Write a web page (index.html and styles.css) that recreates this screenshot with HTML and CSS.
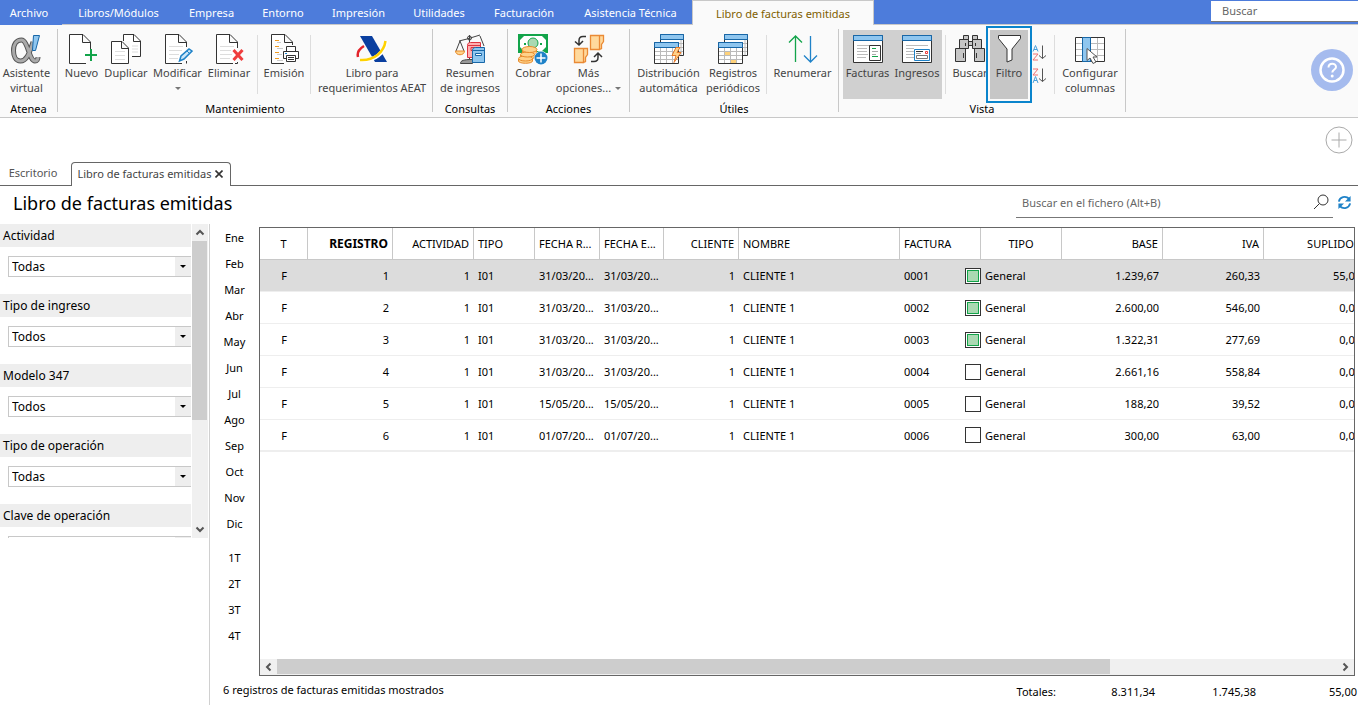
FILE: index.html
```html
<!DOCTYPE html>
<html lang="es">
<head>
<meta charset="utf-8">
<title>Libro de facturas emitidas</title>
<link rel="stylesheet" href="styles.css">
</head>
<body>
<div class="app">
<header class="menubar">
  <nav class="menu" aria-label="Principal">
    <button class="menu-item">Archivo</button>
    <button class="menu-item">Libros/Módulos</button>
    <button class="menu-item">Empresa</button>
    <button class="menu-item">Entorno</button>
    <button class="menu-item">Impresión</button>
    <button class="menu-item">Utilidades</button>
    <button class="menu-item">Facturación</button>
    <button class="menu-item">Asistencia Técnica</button>
    <button class="menu-item active">Libro de facturas emitidas</button>
  </nav>
  <input class="menu-search" type="text" placeholder="Buscar" aria-label="Buscar">
</header>

<section class="ribbon">
  <div class="group g-atenea">
    <div class="tools">
      <button class="tool"><svg viewBox="0 0 32 32" fill="none"><path d="M22 9C18 22 15 28 9.500 28C4.500 28 2.500 23 2.500 17.500C2.500 11 5.500 7 10.500 7C17 7 18 28 24 28C26 28 27 26 27 24" stroke="#555" stroke-width="5"/><path d="M22 9C18 22 15 28 9.500 28C4.500 28 2.500 23 2.500 17.500C2.500 11 5.500 7 10.500 7C17 7 18 28 24 28C26 28 27 26 27 24" stroke="#aaa" stroke-width="3"/><path d="M22.500 2.500h6l-4 15h-3z" fill="#8fc6ef" stroke="#1767a8"/></svg><span>Asistente<br>virtual</span></button>
    </div>
    <h2>Atenea</h2>
  </div>

  <div class="group g-mant">
    <div class="tools">
      <button class="tool w39"><svg viewBox="0 0 32 32" fill="none"><path d="M20 30.500H3.500V1.500H17L24.500 9V18M16.500 1.500V9.500H24.500" fill="#fff" stroke="#333"/><path d="M25 16v12M19 22h12" stroke="#12a44a" stroke-width="2"/></svg>Nuevo</button>
      <button class="tool w50"><svg viewBox="0 0 32 32" fill="none"><path d="M13.500 8V1.500H24L30.500 8V23.500H20V8z" fill="#fff"/><path d="M13.500 8V1.500H24L30.500 8V23.500H22M23.500 1.500V8.500H30.500" stroke="#333"/><path d="M22 13h6M22 16h6M22 19h6" stroke="#ddd"/><path d="M1.500 8.500H12L18.500 15V30.500H1.500zM11.500 8.500V15.500H18.500" fill="#fff" stroke="#333"/><path d="M5 18.500h10M5 22.500h10M5 26.500h10" stroke="#ddd"/></svg>Duplicar</button>
      <button class="tool w53"><svg viewBox="0 0 32 32" fill="none"><path d="M20 30.500H3.500V1.500H17L24.500 9V14M24.500 28v2.500M16.500 1.500V9.500H24.500" fill="#fff" stroke="#333"/><path d="M7 13.500h14M7 17.500h13M7 21.500h10M7 25.500h9" stroke="#ddd"/><path d="M17.500 28l1.500-5 8-7 3 2-8 8z" fill="#cce6f8" stroke="#1f82c8" stroke-width="1.500"/><path d="M25 18l3 3" stroke="#1f82c8"/></svg>Modificar<span class="arrow"></span></button>
      <button class="tool w50"><svg viewBox="0 0 32 32" fill="none"><path d="M20 30.500H3.500V1.500H17L24.500 9V15M24.500 29v1.500H22M16.500 1.500V9.500H24.500" fill="#fff" stroke="#333"/><path d="M7 13.500h14M7 17.500h11M7 21.500h12M7 25.500h10" stroke="#ddd"/><path d="M20.500 17l9 10M29.500 17l-9 10" stroke="#ef3d3d" stroke-width="3"/></svg>Eliminar</button>
      <span class="sep"></span>
      <button class="tool w46"><svg viewBox="0 0 32 32" fill="none"><path d="M16 30.500H3.500V1.500H17L24.500 9V12M16.500 1.500V9.500H24.500" fill="#fff" stroke="#333"/><path d="M7 7.500h4M7 13.500h4M7 19.500h4M7 25.500h4" stroke="#f09a20"/><path d="M9 9.500h4M9 15.500h6M9 21.500h5M9 27.500h6" stroke="#ccc"/><path d="M18.500 18V13.500h9V18M15.500 18.500h15v7h-15z" fill="#fff" stroke="#333"/><path d="M18.500 22.500h9v6h-9zM20 24.500h6M20 26.500h6" fill="#fff" stroke="#333"/><path d="M17 20.500h2" stroke="#1f82c8"/></svg>Emisión</button>
      <span class="sep"></span>
      <button class="tool w116"><svg viewBox="0 0 32 32" fill="none"><path d="M4 3h12l15 26H19z" fill="#0a3fa0"/><path d="M8 13C3 16 1 20 2 24" stroke="#e3242b" stroke-width="2.500"/><path d="M30 8C29 20 18 29 4 27" stroke="#fff" stroke-width="4"/><path d="M29.500 8C28 19 18 28 4 27" stroke="#ffd200" stroke-width="2.500"/></svg><span>Libro para<br>requerimientos AEAT</span></button>
    </div>
    <h2>Mantenimiento</h2>
  </div>

  <div class="group g-cons">
    <div class="tools">
      <button class="tool"><svg viewBox="0 0 32 32" fill="none"><path d="M15.500 2v27M5 8l8-2L26 2M13.500 5a2 2 0 1 0 4 0a2 2 0 1 0-4 0M6 8L2 18M6 8l4 10M26 3l4 10" stroke="#444"/><path d="M1.500 18h9c0 5-9 5-9 0z" fill="#ffd28a" stroke="#e78a2a"/><path d="M6.500 30.500c0-3 3-4 12-4v4z" fill="#999" stroke="#444"/><path d="M13.500 12.500c0-2 1-3 3-3h10v15h-13z" fill="#ffb0b0" stroke="#dd3440"/><path d="M14 12.500h12M17 14.500h6v3h-6z" stroke="#dd3440"/><path d="M18.500 17.500c0-2 1-3 3-3h9v15h-12z" fill="#8fc6ef" stroke="#1767a8"/><path d="M19 17.500h11" stroke="#1767a8"/><path d="M21.500 20.500h6v2h-6z" fill="#fff" stroke="#1767a8"/></svg><span>Resumen<br>de ingresos</span></button>
    </div>
    <h2>Consultas</h2>
  </div>

  <div class="group g-acc">
    <div class="tools">
      <button class="tool w42"><svg viewBox="0 0 32 32" fill="none"><path d="M2 2h28v17H2z" fill="#fff" stroke="#12a44a" stroke-width="2"/><path d="M2 2h6L2 8zM30 2h-6l6 6zM30 19v-6l-6 6zM2 19v-6l6 6z" fill="#12a44a"/><circle cx="16" cy="10" r="5" fill="#aad9b2" stroke="#12a44a"/><path d="M7 11h2M23 11h2" stroke="#12a44a" stroke-width="2"/><g fill="#ffd28a" stroke="#e78a2a"><path d="M1.500 26v2c0 3 14 3 14 0v-2M3.500 22v2c0 3 14 3 14 0v-2M5.500 17v3c0 3 14 3 14 0v-3"/><ellipse cx="8.500" cy="25.500" rx="7" ry="2.500"/><ellipse cx="10.500" cy="21.500" rx="7" ry="2.500"/><ellipse cx="12.500" cy="16.500" rx="7.500" ry="3"/></g><circle cx="24" cy="25" r="7" fill="#fff"/><circle cx="24" cy="25" r="6.500" fill="#1f82c8"/><path d="M24 20.500v9M19.500 25h9" stroke="#fff" stroke-width="1.500"/></svg>Cobrar</button>
      <button class="tool w69"><svg viewBox="0 0 32 32" fill="none"><g fill="#ffd99c" stroke="#ea8a35" stroke-width="1.300"><path d="M26.500 2.500h4v6l-2 3v4l-2 1zM17.500 2.500h9v14h-9zM10.500 15.500h4v6l-2 3v4l-2 1zM1.500 15.500h9v14h-9z"/></g><path d="M13 3.500H10c-3 0-4 1-4 4V12M2 8.500L6 12l4-4M18 28.500h3c3 0 4-1 4-4V20M21 24l4-4 4 4" stroke="#333" stroke-width="1.500"/></svg><span>Más<br>opciones...<i class="arrow inline"></i></span></button>
    </div>
    <h2>Acciones</h2>
  </div>

  <div class="group g-util">
    <div class="tools">
      <button class="tool w69"><svg viewBox="0 0 32 32" fill="none"><path d="M7.500 1.500h23v21h-23z" fill="#fff" stroke="#333"/><path d="M26 10.500h4M26 14.500h4M26 18.500h4M28 7v15" stroke="#bbb"/><path d="M7.500 1.500h23v5h-23z" fill="#8fc6ef" stroke="#1767a8"/><path d="M1.500 9.500h24v21h-24z" fill="#fff" stroke="#333"/><path d="M2 18.500h23M2 22.500h23M2 26.500h23M7.500 15v15M13.500 15v15M19.500 15v15" stroke="#bbb"/><path d="M1.500 9.500h24v5h-24z" fill="#8fc6ef" stroke="#1767a8"/><path d="M23 14.500l-4 8h4l-2 7 7-10h-4l3-5z" fill="#ffd28a" stroke="#e77a2a"/></svg><span>Distribución<br>automática</span></button>
      <button class="tool w60"><svg viewBox="0 0 32 32" fill="none"><path d="M7.500 1.500h23v21h-23z" fill="#fff" stroke="#333"/><path d="M26 10.500h4M26 14.500h4M26 18.500h4M28 7v15" stroke="#bbb"/><path d="M7.500 1.500h23v5h-23z" fill="#8fc6ef" stroke="#1767a8"/><path d="M1.500 9.500h24v21h-24z" fill="#fff" stroke="#333"/><path d="M8 19h5v3H8zM14 27h5v3h-5z" fill="#ffd27a"/><path d="M2 18.500h23M2 22.500h23M2 26.500h23M7.500 15v15M13.500 15v15M19.500 15v15" stroke="#bbb"/><path d="M1.500 9.500h24v5h-24z" fill="#8fc6ef" stroke="#1767a8"/></svg><span>Registros<br>periódicos</span></button>
      <span class="sep"></span>
      <button class="tool w65"><svg viewBox="0 0 32 32" fill="none" stroke-width="1.300"><path d="M8.500 29V3M2 9.500L8.500 3L15 9.500" stroke="#12a44a"/><path d="M23.500 3v26M17 22.500l6.500 6.500 6.500-6.500" stroke="#1f82c8"/></svg>Renumerar</button>
    </div>
    <h2>Útiles</h2>
  </div>

  <div class="group g-vista">
    <div class="tools">
      <div class="pressed">
        <button class="tool w49"><svg viewBox="0 0 32 32" fill="none"><path d="M1.500 2.500h29v27h-29z" fill="#fff" stroke="#333"/><path d="M5 12.500h20M5 15.500h10M5 18.500h10M5 21.500h11M5 24.500h9" stroke="#bbb"/><path d="M1.500 2.500h29v5h-29z" fill="#8fc6ef" stroke="#1767a8"/><path d="M17.500 12.500h11v15h-11z" fill="#fff" stroke="#333"/><path d="M20 15.500h4M20 23.500h6" stroke="#12a44a"/><path d="M20 18.500h6M20 21.500h4" stroke="#aaa"/></svg>Facturas</button>
        <button class="tool w50"><svg viewBox="0 0 32 32" fill="none"><path d="M1.500 2.500h29v27h-29z" fill="#fff" stroke="#333"/><path d="M5 12.500h22M5 15.500h8M5 18.500h8M5 21.500h8M5 24.500h8" stroke="#bbb"/><path d="M1.500 2.500h29v5h-29z" fill="#8fc6ef" stroke="#1767a8"/><path d="M13.500 16.500h15v11h-15z" fill="#fff" stroke="#1f82c8"/><path d="M15 18.500h7" stroke="#333"/><path d="M15 20.500h5" stroke="#999"/><path d="M24.500 18.500h2v2h-2z" stroke="#ef3d3d"/><path d="M15.500 22.500h11v3h-11z" stroke="#777"/></svg>Ingresos</button>
      </div>
      <span class="sep"></span>
      <button class="tool w42"><svg viewBox="0 0 32 32" fill="none"><path d="M9.500 2.500h5v4h-5zM18.500 2.500h5v4h-5zM5.500 6.500h9v9h-9zM18.500 6.500h9v9h-9zM14.500 8.500h4v4h-4zM1.500 15.500h10v13h-10zM20.500 15.500h10v13h-10z" fill="#c6c6c6" stroke="#333"/><path d="M11.500 10v3M21.500 10v3M9.500 20v5M22.500 20v5" stroke="#333"/></svg>Buscar</button>
      <button class="tool filter"><svg viewBox="0 0 32 32" fill="none"><path d="M5.500 2.500h22v3L19 16v11l-5 2V16L5.500 5.500z" fill="#fff" stroke="#333"/></svg>Filtro</button>
      <div class="sorts">
        <button class="sort" aria-label="Orden ascendente"><svg viewBox="0 0 16 16" fill="none"><path d="M2 7L4.500 1L7 7M3 5h3" stroke="#4aa0dc"/><path d="M2 9.500h5L2 15.500h5" stroke="#f07070"/><path d="M11.500 1v13M8 11l3.500 3 3.500-3" stroke="#555"/></svg></button>
        <button class="sort" aria-label="Orden descendente"><svg viewBox="0 0 16 16" fill="none"><path d="M2 1.500h5L2 7.500h5" stroke="#f07070"/><path d="M2 15.500L4.500 9L7 15.500M3 13h3" stroke="#4aa0dc"/><path d="M11.500 1v13M8 11l3.500 3 3.500-3" stroke="#555"/></svg></button>
      </div>
      <span class="sep"></span>
      <button class="tool w64"><svg viewBox="0 0 32 32" fill="none"><path d="M1.500 4.500h29v24h-29z" fill="#fff" stroke="#333"/><path d="M2 10.500h28M2 16.500h28M2 22.500h28M23.500 5v23" stroke="#bbb"/><path d="M8.500 4.500h8v24h-8z" fill="#8fc6ef" stroke="#1767a8"/><path d="M13 15.500v12l3-2.500 3 5.500 3-1.500-3-5h4z" fill="#fff" stroke="#555"/></svg><span>Configurar<br>columnas</span></button>
    </div>
    <h2>Vista</h2>
  </div>
  <button class="help" aria-label="Ayuda"><svg viewBox="0 0 42 42" fill="none"><circle cx="21" cy="21" r="21" fill="#a5bbee"/><circle cx="21" cy="21" r="11.500" stroke="#fff" stroke-width="2.500"/><path d="M17.500 18.500c0-5 7.500-5 7.500-.5 0 2.500-3.700 2.500-3.700 5.500" stroke="#fff" stroke-width="2"/><circle cx="21.200" cy="27" r="1.500" fill="#fff"/></svg></button>
</section>

<div class="spare"><button class="add" aria-label="Añadir"><svg viewBox="0 0 28 28" fill="none"><circle cx="14" cy="14" r="13" stroke="#aaa"/><path d="M14 6.500v15M6.500 14h15" stroke="#aaa"/></svg></button></div>

<nav class="tabs" aria-label="Pestañas">
  <button class="tab">Escritorio</button>
  <button class="tab current">Libro de facturas emitidas <svg viewBox="0 0 8 8"><path d="M.5.5l7 7M7.500.5l-7 7" stroke="#333" stroke-width="1.600"/></svg></button>
</nav>

<div class="titlebar">
  <h1>Libro de facturas emitidas</h1>
  <div class="find">
    <input type="text" placeholder="Buscar en el fichero (Alt+B)" aria-label="Buscar en el fichero">
    <svg viewBox="0 0 16 16" fill="none"><circle cx="10" cy="6" r="5" stroke="#333"/><path d="M6.500 9.500L1 15" stroke="#333"/></svg>
  </div>
  <button class="refresh" aria-label="Actualizar"><svg viewBox="0 0 16 16" fill="none"><path d="M2 7C3 2 9 .5 13 4M14 9c-1 5-7 6.500-11 3" stroke="#1f82c8" stroke-width="2"/><path d="M14.500 1v6h-6zM1.500 15V9h6z" fill="#1f82c8"/></svg></button>
</div>

<main class="body">
  <aside class="side">
    <div class="filters">
      <div class="fields">
        <div class="field"><label for="f1">Actividad</label><select id="f1"><option>Todas</option></select></div>
        <div class="field"><label for="f2">Tipo de ingreso</label><select id="f2"><option>Todos</option></select></div>
        <div class="field"><label for="f3">Modelo 347</label><select id="f3"><option>Todos</option></select></div>
        <div class="field"><label for="f4">Tipo de operación</label><select id="f4"><option>Todas</option></select></div>
        <div class="field"><label for="f5">Clave de operación</label><select id="f5"><option>Todas</option></select></div>
      </div>
      <div class="vbar"><svg viewBox="0 0 16 16" fill="none"><path d="M4.500 10L8 6.500l3.500 3.500" stroke="#555" stroke-width="2"/></svg><span class="vthumb"></span><svg viewBox="0 0 16 16" fill="none"><path d="M4.500 6L8 9.500L11.500 6" stroke="#555" stroke-width="2"/></svg></div>
    </div>
  </aside>
  <nav class="months" aria-label="Periodo">
    <button>Ene</button><button>Feb</button><button>Mar</button><button>Abr</button><button>May</button><button>Jun</button><button>Jul</button><button>Ago</button><button>Sep</button><button>Oct</button><button>Nov</button><button>Dic</button>
    <button class="quarter">1T</button><button>2T</button><button>3T</button><button>4T</button>
  </nav>
  <section class="content">
    <div class="grid">
      <div class="scroll">
      <table>
        <colgroup><col class="c48"><col class="c85"><col class="c81"><col class="c61"><col class="c65"><col class="c64"><col class="c75"><col class="c161"><col class="c81"><col class="c81"><col class="c101"><col class="c101"><col class="c101"></colgroup>
        <thead><tr><th class="mid">T</th><th class="num sorted">REGISTRO</th><th class="num">ACTIVIDAD</th><th>TIPO</th><th>FECHA R...</th><th>FECHA E...</th><th class="num">CLIENTE</th><th>NOMBRE</th><th>FACTURA</th><th class="mid">TIPO</th><th class="num">BASE</th><th class="num">IVA</th><th class="num">SUPLIDOS</th></tr></thead>
        <tbody>
        <tr class="selected"><td class="mid">F</td><td class="num">1</td><td class="num">1</td><td>I01</td><td>31/03/20...</td><td>31/03/20...</td><td class="num">1</td><td>CLIENTE 1</td><td class="inv"><div>0001<input type="checkbox" aria-label="Factura 0001" checked></div></td><td>General</td><td class="num">1.239,67</td><td class="num">260,33</td><td class="num">55,00</td></tr>
        <tr><td class="mid">F</td><td class="num">2</td><td class="num">1</td><td>I01</td><td>31/03/20...</td><td>31/03/20...</td><td class="num">1</td><td>CLIENTE 1</td><td class="inv"><div>0002<input type="checkbox" aria-label="Factura 0002" checked></div></td><td>General</td><td class="num">2.600,00</td><td class="num">546,00</td><td class="num">0,00</td></tr>
        <tr><td class="mid">F</td><td class="num">3</td><td class="num">1</td><td>I01</td><td>31/03/20...</td><td>31/03/20...</td><td class="num">1</td><td>CLIENTE 1</td><td class="inv"><div>0003<input type="checkbox" aria-label="Factura 0003" checked></div></td><td>General</td><td class="num">1.322,31</td><td class="num">277,69</td><td class="num">0,00</td></tr>
        <tr><td class="mid">F</td><td class="num">4</td><td class="num">1</td><td>I01</td><td>31/03/20...</td><td>31/03/20...</td><td class="num">1</td><td>CLIENTE 1</td><td class="inv"><div>0004<input type="checkbox" aria-label="Factura 0004"></div></td><td>General</td><td class="num">2.661,16</td><td class="num">558,84</td><td class="num">0,00</td></tr>
        <tr><td class="mid">F</td><td class="num">5</td><td class="num">1</td><td>I01</td><td>15/05/20...</td><td>15/05/20...</td><td class="num">1</td><td>CLIENTE 1</td><td class="inv"><div>0005<input type="checkbox" aria-label="Factura 0005"></div></td><td>General</td><td class="num">188,20</td><td class="num">39,52</td><td class="num">0,00</td></tr>
        <tr><td class="mid">F</td><td class="num">6</td><td class="num">1</td><td>I01</td><td>01/07/20...</td><td>01/07/20...</td><td class="num">1</td><td>CLIENTE 1</td><td class="inv"><div>0006<input type="checkbox" aria-label="Factura 0006"></div></td><td>General</td><td class="num">300,00</td><td class="num">63,00</td><td class="num">0,00</td></tr>
        </tbody>
      </table>
      </div>
      <div class="hbar"><svg viewBox="0 0 16 16" fill="none"><path d="M10 4.500L6.500 8l3.500 3.500" stroke="#555" stroke-width="2"/></svg><div class="htrack"><span class="hthumb"></span></div><svg viewBox="0 0 16 16" fill="none"><path d="M6 4.500L9.500 8L6 11.500" stroke="#555" stroke-width="2"/></svg></div>
    </div>
    <footer class="status"><span class="count">6 registros de facturas emitidas mostrados</span><span class="totals">Totales:</span><span class="total">8.311,34</span><span class="total">1.745,38</span><span class="total">55,00</span></footer>
  </section>
</main>
</div>
</body>
</html>
```
FILE: styles.css
```css
* { box-sizing: border-box; }
body { margin: 0; background: #fff; color: #000; font: 11px/15px "Noto Sans", "Open Sans", sans-serif; }
button, input, select { font: inherit; color: inherit; border: 0; background: none; padding: 0; margin: 0; border-radius: 0; }
h1, h2 { margin: 0; font-weight: 400; }
svg { display: block; flex: none; }
.app { display: flex; flex-direction: column; height: 100vh; overflow: hidden; }

.menubar { display: flex; justify-content: space-between; background: #4d7cdb; height: 25px; flex: none; border-bottom: 1px solid #c8c8c8; }
.menu { display: grid; grid-template-columns: 62px 113px 73px 70px 81px 80px 90px 123px 182px; height: 25px; }
.menu-item { color: #fff; white-space: nowrap; }
.menu-item:first-child { background: #4d7cdb; padding: 0 4px 0 0; }
.menu-item.active { background: #fafafa; color: #806000; border: 1px solid #c8c8c8; border-bottom: 0; }
.menu-search { width: 147px; height: 21px; margin-top: 1px; background: #fff; border-bottom: 1px solid #777; padding: 0 11px 2px; }
.menu-search::placeholder { color: #666; opacity: 1; }

.ribbon { display: flex; background: #fafafa; border-bottom: 1px solid #c8c8c8; height: 93px; flex: none; }
.group { display: flex; flex-direction: column; align-items: center; border-right: 1px solid #c8c8c8; margin: 4px 0 5px; flex: none; }
.group h2 { font-size: 11px; line-height: 15px; margin-top: 4px; }
.g-atenea { width: 58px; }
.g-mant { width: 375px; }
.g-cons { width: 75px; }
.g-acc { width: 122px; }
.g-util { width: 209px; }
.g-vista { width: 287px; }
.tools { display: flex; height: 68px; flex: none; padding: 1px 0 0 4px; width: 100%; }
.g-atenea .tools { padding: 1px 4px 0 0; justify-content: center; }
.g-cons .tools { padding-left: 0; justify-content: center; }
.tool { display: flex; flex-direction: column; align-items: center; height: 69px; padding-top: 3px; color: #444; white-space: nowrap; flex: none; }
.tool svg { width: 32px; height: 32px; }
.w39 { width: 39px; } .w42 { width: 42px; } .w46 { width: 46px; } .w49 { width: 49px; } .w50 { width: 50px; } .w53 { width: 53px; }
.w60 { width: 60px; } .w64 { width: 64px; } .w65 { width: 65px; } .w69 { width: 69px; } .w116 { width: 116px; }
.arrow { border: 3px solid transparent; border-top-color: #777; border-bottom: 0; margin-top: 7px; }
.arrow.inline { display: inline-block; margin: 0 0 1px 4px; vertical-align: middle; }
.sep { width: 1px; height: 59px; margin: 5px 3px 0; background: #ddd; flex: none; }
.pressed { display: flex; height: 69px; background: #d0d0d0; }
.filter { position: relative; width: 46px; height: 77px; margin: -4px 0 0 -5px; padding-top: 5px; border: 2px solid #0a84cc; background: #c6c6c6; box-shadow: inset 0 0 0 2px #fafafa; z-index: 1; }
.sorts { display: flex; flex-direction: column; gap: 6px; padding: 14px 4px 0 0; margin-left: -1px; }
.sort svg { width: 16px; height: 17px; }
.help { margin: 0 5px 2px auto; }
.help svg { width: 42px; height: 42px; }

.spare { display: flex; justify-content: flex-end; align-items: center; height: 44px; flex: none; padding: 0 5px 1px 0; }
.add svg { width: 28px; height: 28px; }

.tabs { display: flex; height: 24px; flex: none; border-bottom: 1px solid #666; }
.tab { width: 71px; color: #555; padding: 0 5px 2px 0; }
.tab.current { display: flex; align-items: center; justify-content: center; gap: 3px; width: 160px; height: 24px; background: #fff; border: 1px solid #666; border-bottom: 0; border-radius: 4px 4px 0 0; padding: 0 2px 2px 0; color: #444; }
.tab svg { width: 8px; height: 8px; }

.titlebar { display: flex; align-items: center; height: 37px; flex: none; padding: 0 6px 4px 13px; }
.titlebar h1 { font-size: 18px; line-height: 24px; }
.find { display: flex; align-items: center; width: 317px; height: 30px; margin-left: auto; border-bottom: 1px solid #777; padding: 0 4px 0 6px; }
.find input { flex: 1; height: 22px; outline: 0; }
.find input::placeholder { color: #666; opacity: 1; }
.find svg { width: 16px; height: 16px; }
.refresh { margin-left: 4px; }
.refresh svg { width: 15px; height: 15px; }

.body { display: flex; flex: 1; min-height: 0; }
.side { width: 210px; border-right: 1px solid #d0d0d0; flex: none; margin-top: 1px; }
.filters { display: flex; height: 314px; overflow: hidden; }
.fields { width: 191px; }
.field { position: relative; height: 70px; }
.field label { display: block; height: 23px; line-height: 24px; padding-left: 3px; background: #eee; font-size: 12px; }
.field select { display: block; appearance: none; width: 183px; height: 21px; margin: 9px 0 0 8px; padding-left: 3px; border: 1px solid #c8c8c8; border-right: 0; font-size: 12px; background: linear-gradient(#eee, #eee) right / 16px 100% no-repeat; }
.field::after { content: ""; position: absolute; right: 5px; top: 41px; border: 3px solid transparent; border-top-color: #000; border-bottom: 0; pointer-events: none; }
.vbar { display: flex; flex-direction: column; width: 16px; margin-left: 1px; background: #f0f0f0; }
.vbar svg { width: 16px; height: 17px; }
.vthumb { height: 179px; margin-bottom: auto; background: #cdcdcd; width: 15px; }
.months { display: flex; flex-direction: column; width: 49px; flex: none; padding-top: 1px; }
.months button { height: 26px; flex: none; }
.months .quarter { margin-top: 8px; }
.content { display: flex; flex-direction: column; flex: 1; min-width: 0; }
.grid { display: flex; flex-direction: column; flex: 1; border: 1px solid #666; margin: 4px 3px 0 0; min-height: 0; }
.scroll { flex: 1; overflow: hidden; }
table { border-collapse: separate; border-spacing: 0; table-layout: fixed; width: 1105px; }
.c48 { width: 48px; } .c61 { width: 61px; } .c64 { width: 64px; } .c65 { width: 65px; } .c75 { width: 75px; } .c81 { width: 81px; } .c85 { width: 85px; } .c101 { width: 101px; } .c161 { width: 161px; }
th, td { height: 32px; padding: 0 4px; text-align: left; font-weight: 400; white-space: nowrap; }
th { border-right: 1px solid #c8c8c8; border-bottom: 1px solid #c8c8c8; }
td { border-bottom: 1px solid #eee; }
tbody tr:last-child td { border-bottom: 2px solid #eee; }
.selected td { background: #dcdcdc; }
.mid { text-align: center; }
.num { text-align: right; }
th.sorted { font-size: 12px; font-weight: 700; }
td.inv { padding-right: 0; }
.inv div { display: flex; align-items: center; justify-content: space-between; }
.inv input { appearance: none; width: 16px; height: 16px; border: 1px solid #333; background: #fff; }
.inv input:checked { background: #aad9b2; box-shadow: inset 0 0 0 1px #fff, inset 0 0 0 2px #12a44a; }
.hbar { display: flex; height: 16px; flex: none; background: #f0f0f0; }
.hbar svg { width: 17px; height: 16px; }
.htrack { flex: 1; }
.hthumb { display: block; width: 78.600%; height: 15px; background: #cdcdcd; }
.status { display: flex; align-items: center; height: 29px; flex: none; padding-bottom: 2px; }
.count { margin: 0 auto 0 -36px; }
.totals { margin-right: -2px; margin-top: 4px; }
.total { width: 101px; text-align: right; margin-top: 4px; }
.status .total:last-child { margin-right: 1px; }
```
